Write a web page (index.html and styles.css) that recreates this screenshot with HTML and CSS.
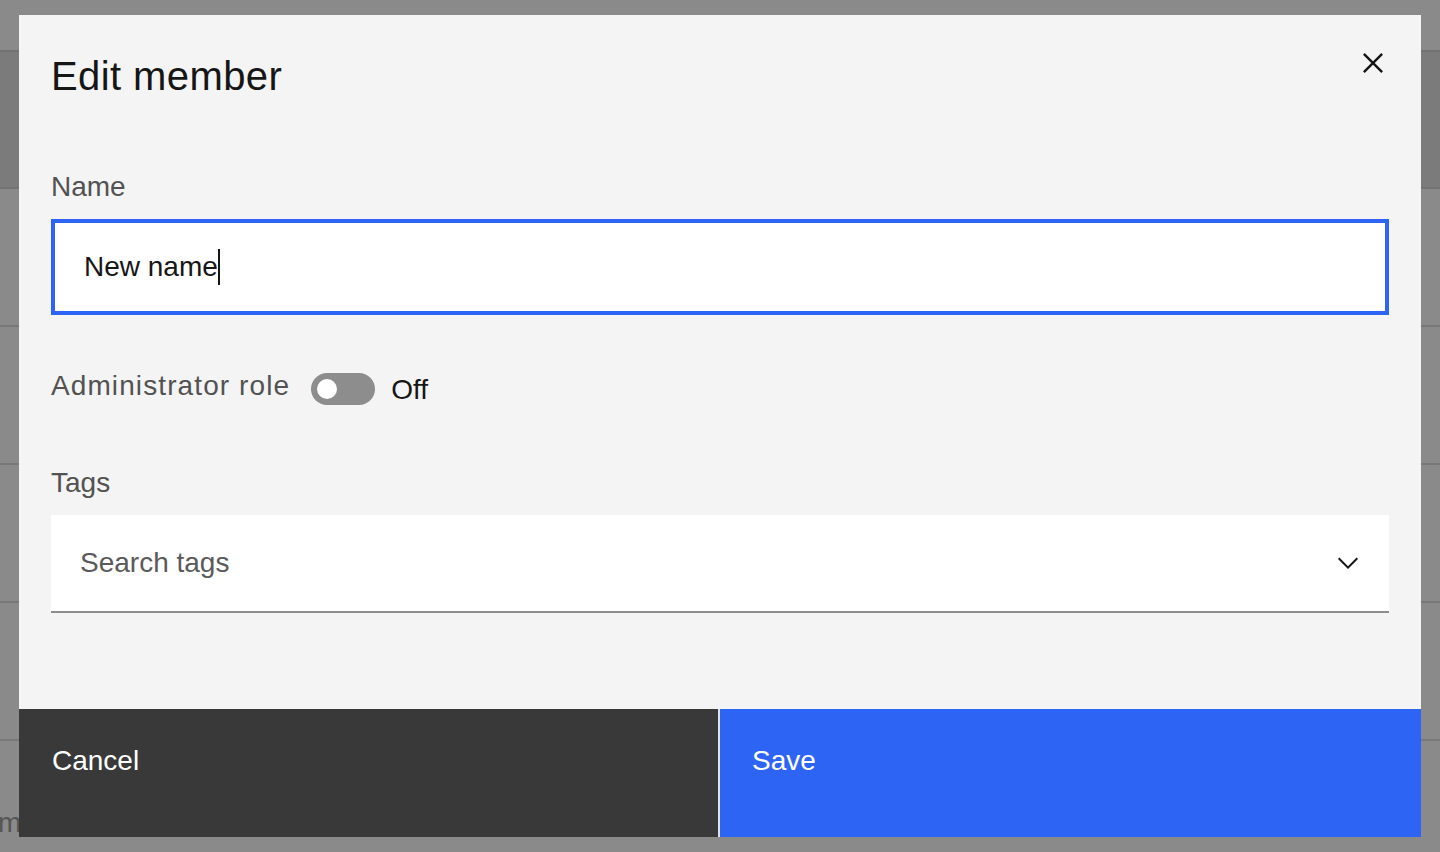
FILE: index.html
```html
<!DOCTYPE html>
<html lang="en">
<head>
<meta charset="utf-8">
<title>Edit member</title>
<link rel="stylesheet" href="styles.css">
</head>
<body>
  <div class="page">
    <div class="page-head"></div>
    <div class="page-row"></div>
    <div class="page-row"></div>
    <div class="page-row"></div>
    <div class="page-row"></div>
    <div class="page-row page-row--text"><span class="page-cell">m</span></div>
  </div>

  <div class="modal" role="dialog" aria-labelledby="modal-title">
    <div class="modal-header">
      <h2 class="modal-title" id="modal-title">Edit member</h2>
      <button class="modal-close" type="button" aria-label="Close">
        <svg viewBox="0 0 32 32" width="40" height="40" aria-hidden="true">
          <polygon fill="#161616" points="24 9.4 22.6 8 16 14.6 9.4 8 8 9.4 14.6 16 8 22.6 9.4 24 16 17.4 22.6 24 24 22.6 17.4 16 24 9.4"/>
        </svg>
      </button>
    </div>

    <div class="modal-body">
      <div class="field">
        <div class="field-label">Name</div>
        <div class="text-input">
          <span class="text-input-value">New name</span><span class="caret"></span>
        </div>
      </div>

      <div class="toggle-row">
        <span class="field-label field-label--wide">Administrator role</span>
        <span class="toggle"><span class="toggle-knob"></span></span>
        <span class="toggle-state">Off</span>
      </div>

      <div class="field field--tags">
        <div class="field-label">Tags</div>
        <div class="combo">
          <span class="combo-placeholder">Search tags</span>
          <svg class="combo-chevron" viewBox="0 0 16 16" width="32" height="32" aria-hidden="true">
            <path fill="#161616" d="M8 11L3 6 3.7 5.3 8 9.6 12.3 5.3 13 6z"/>
          </svg>
        </div>
      </div>
    </div>

    <div class="modal-footer">
      <div class="btn btn--secondary" role="button" tabindex="0">Cancel</div>
      <div class="btn btn--primary" role="button" tabindex="0">Save</div>
    </div>
  </div>
</body>
</html>
```

FILE: styles.css
```css
* {
  box-sizing: border-box;
}

html, body {
  margin: 0;
  padding: 0;
}

body {
  width: 1440px;
  height: 852px;
  overflow: hidden;
  background: #8a8a8a;
  font-family: "Liberation Sans", Arial, sans-serif;
  color: #161616;
}

/* underlying page behind the overlay */
.page {
  padding-top: 50px;
}

.page-head {
  height: 139px;
  background: #7b7b7b;
  border-top: 2px solid #727272;
  border-bottom: 2px solid #747474;
}

.page-row {
  height: 138px;
  border-bottom: 2px solid #787878;
}

.page-row--text {
  padding-top: 64px;
}

.page-cell {
  display: block;
  font-size: 28px;
  line-height: 36px;
  color: #555555;
  margin-left: -2px;
}

/* modal */
.modal {
  position: fixed;
  left: 19px;
  top: 15px;
  width: 1402px;
  height: 822px;
  background: #f4f4f4;
  display: flex;
  flex-direction: column;
}

.modal-header {
  display: flex;
  justify-content: space-between;
  align-items: flex-start;
  padding: 28px 28px 0 32px;
}

.modal-title {
  margin: 9px 0 0;
  font-size: 40px;
  line-height: 48px;
  font-weight: 400;
  letter-spacing: 0.4px;
  color: #161616;
}

.modal-close {
  width: 40px;
  height: 40px;
  padding: 0;
  border: 0;
  background: transparent;
  display: block;
}

.modal-close svg {
  display: block;
}

.modal-body {
  padding: 0 32px;
  margin-top: 69px;
}

.field-label {
  font-size: 28px;
  line-height: 36px;
  color: #525252;
  margin-bottom: 14px;
}

.field-label--wide {
  letter-spacing: 1.1px;
  margin-bottom: 0;
  padding-bottom: 6px;
}

.text-input {
  height: 96px;
  background: #ffffff;
  border: 4px solid #2e64f4;
  padding: 0 29px;
  display: flex;
  align-items: center;
  font-size: 28px;
  line-height: 36px;
  color: #161616;
}

.caret {
  display: inline-block;
  width: 2px;
  height: 36px;
  background: #161616;
}

.toggle-row {
  display: flex;
  align-items: center;
  margin-top: 56px;
  height: 36px;
}

.toggle {
  width: 64px;
  height: 32px;
  border-radius: 16px;
  background: #8d8d8d;
  margin-left: 21px;
  display: flex;
  align-items: center;
  padding-left: 6px;
}

.toggle-knob {
  width: 20px;
  height: 20px;
  border-radius: 50%;
  background: #ffffff;
}

.toggle-state {
  margin-left: 16px;
  font-size: 28px;
  line-height: 36px;
  color: #161616;
  padding-top: 2px;
}

.field--tags {
  margin-top: 58px;
}

.combo {
  height: 98px;
  background: #ffffff;
  border-bottom: 2px solid #8d8d8d;
  display: flex;
  align-items: center;
  justify-content: space-between;
  padding: 0 25px 0 29px;
}

.combo-placeholder {
  font-size: 28px;
  line-height: 36px;
  color: #5a5a5a;
}

.combo-chevron {
  display: block;
}

.modal-footer {
  margin-top: auto;
  height: 128px;
  display: grid;
  grid-template-columns: 699px 1fr;
  column-gap: 2px;
  background: #e2e2e2;
}

.btn {
  font-size: 28px;
  line-height: 36px;
  color: #ffffff;
  padding: 34px 32px 0 33px;
  height: 128px;
  cursor: pointer;
}

.btn--secondary {
  background: #393939;
}

.btn--primary {
  background: #2e64f4;
  padding-left: 32px;
}
```
